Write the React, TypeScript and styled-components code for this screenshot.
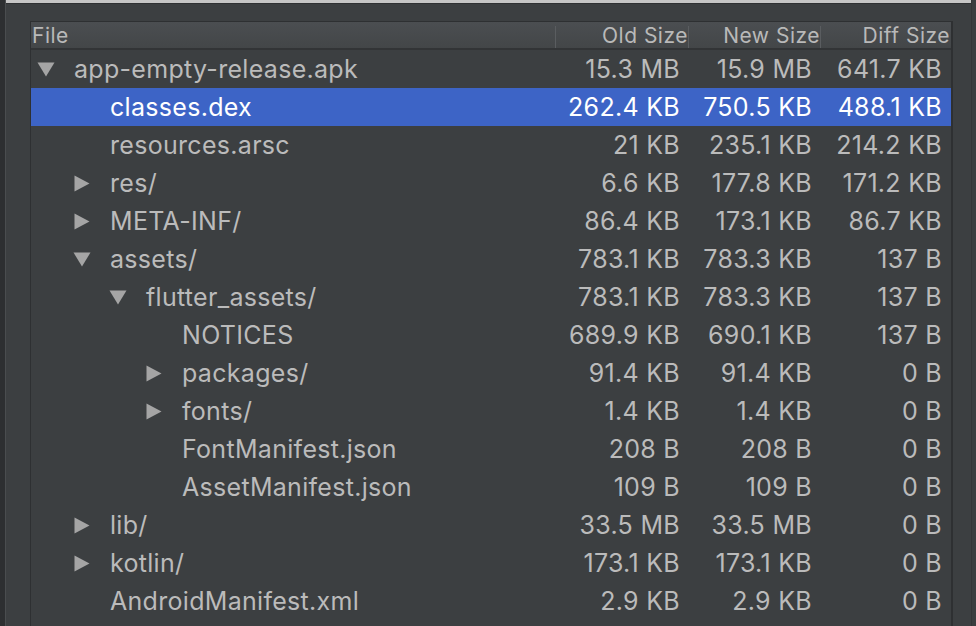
import React from "react";
import styled, { createGlobalStyle } from "styled-components";

const Global = createGlobalStyle`
  html, body { margin: 0; padding: 0; background: #3c3f41; overflow: hidden; }
  #root { height: 626px; }
`;

const Frame = styled.div`
  display: grid;
  grid-template-columns: 6px 1fr 5px;
  height: 626px;
  width: 976px;
  background: #3c3f41;
  font-family: Inter, "Noto Sans", sans-serif;
`;

const LeftRail = styled.div`
  background: #2d2f31;
  border-right: 1px solid #4a4d4f;
`;

const RightRail = styled.div`
  background: #3a3d3f;
  border-left: 1px solid #333537;
`;

const Main = styled.div`
  display: flex;
  flex-direction: column;
  min-width: 0;
`;

const TopStrip = styled.div`
  height: 3px;
  background: #c6c6c6;
  border-bottom: 1px solid #2f3133;
`;

const Panel = styled.div`
  flex: 1;
  padding: 17px 0 0 24px;
  display: flex;
  overflow: hidden;
`;

const Table = styled.div`
  width: 920px;
  border-left: 1px solid #2e3032;
  border-top: 1px solid #2e3032;
  border-right: 2px solid #2e3032;
  display: flex;
  flex-direction: column;
`;

const cols = "524px 133px 132px 130px";

const Header = styled.div`
  display: grid;
  grid-template-columns: ${cols};
  height: 26px;
  background: linear-gradient(#4b4e51, #434648);
  border-bottom: 2px solid #323436;
  color: #b9b9b9;
  font-size: 21px;
  line-height: 28px;
`;

const HeadCell = styled.div<{ $right?: boolean }>`
  padding: 0 ${(p) => (p.$right ? "0" : "1px")};
  text-align: ${(p) => (p.$right ? "right" : "left")};
  white-space: nowrap;
  overflow: hidden;
  position: relative;
  box-sizing: border-box;
  letter-spacing: 0.5px;
  ${(p) =>
    p.$right
      ? `&::before { content: ""; position: absolute; left: -2px; top: 4px; height: 22px; width: 2px; background: #2b2d2f; border-right: 1px solid #5a5d60; }`
      : ""}
`;

const Row = styled.div<{ $selected?: boolean }>`
  display: grid;
  grid-template-columns: ${cols};
  height: 38px;
  line-height: 38px;
  font-size: 25px;
  letter-spacing: 0.3px;
  color: ${(p) => (p.$selected ? "#ffffff" : "#bbbbbb")};
  background: ${(p) => (p.$selected ? "#3d64c6" : "transparent")};
`;

const NameCell = styled.div<{ $level: number }>`
  display: flex;
  align-items: center;
  padding-left: ${(p) => 6 + p.$level * 36}px;
  white-space: nowrap;
`;

const Toggle = styled.span`
  width: 37px;
  flex: none;
  display: flex;
  align-items: center;
`;

const Num = styled.div`
  text-align: right;
  padding-right: 8px;
  white-space: nowrap;
`;

const Arrow = ({ open }: { open: boolean }) =>
  open ? (
    <svg width="18" height="16" viewBox="0 0 18 16">
      <polygon points="0.5,1.5 17.5,1.5 9,15.5" fill="#a5a5a5" />
    </svg>
  ) : (
    <svg width="18" height="17" viewBox="0 0 18 17">
      <polygon points="1.5,0.5 16.5,8.5 1.5,16.5" fill="#a5a5a5" />
    </svg>
  );

type Item = {
  name: string;
  level: number;
  toggle?: "open" | "closed";
  old: string;
  nw: string;
  diff: string;
  selected?: boolean;
};

const items: Item[] = [
  { name: "app-empty-release.apk", level: 0, toggle: "open", old: "15.3 MB", nw: "15.9 MB", diff: "641.7 KB" },
  { name: "classes.dex", level: 1, old: "262.4 KB", nw: "750.5 KB", diff: "488.1 KB", selected: true },
  { name: "resources.arsc", level: 1, old: "21 KB", nw: "235.1 KB", diff: "214.2 KB" },
  { name: "res/", level: 1, toggle: "closed", old: "6.6 KB", nw: "177.8 KB", diff: "171.2 KB" },
  { name: "META-INF/", level: 1, toggle: "closed", old: "86.4 KB", nw: "173.1 KB", diff: "86.7 KB" },
  { name: "assets/", level: 1, toggle: "open", old: "783.1 KB", nw: "783.3 KB", diff: "137 B" },
  { name: "flutter_assets/", level: 2, toggle: "open", old: "783.1 KB", nw: "783.3 KB", diff: "137 B" },
  { name: "NOTICES", level: 3, old: "689.9 KB", nw: "690.1 KB", diff: "137 B" },
  { name: "packages/", level: 3, toggle: "closed", old: "91.4 KB", nw: "91.4 KB", diff: "0 B" },
  { name: "fonts/", level: 3, toggle: "closed", old: "1.4 KB", nw: "1.4 KB", diff: "0 B" },
  { name: "FontManifest.json", level: 3, old: "208 B", nw: "208 B", diff: "0 B" },
  { name: "AssetManifest.json", level: 3, old: "109 B", nw: "109 B", diff: "0 B" },
  { name: "lib/", level: 1, toggle: "closed", old: "33.5 MB", nw: "33.5 MB", diff: "0 B" },
  { name: "kotlin/", level: 1, toggle: "closed", old: "173.1 KB", nw: "173.1 KB", diff: "0 B" },
  { name: "AndroidManifest.xml", level: 1, old: "2.9 KB", nw: "2.9 KB", diff: "0 B" },
];

export default function App() {
  return (
    <>
      <Global />
      <Frame>
        <LeftRail />
        <Main>
          <TopStrip />
          <Panel>
            <Table>
              <Header>
                <HeadCell>File</HeadCell>
                <HeadCell $right>Old Size</HeadCell>
                <HeadCell $right>New Size</HeadCell>
                <HeadCell $right>Diff Size</HeadCell>
              </Header>
              {items.map((it) => (
                <Row key={it.name} $selected={it.selected}>
                  <NameCell $level={it.level}>
                    <Toggle>{it.toggle ? <Arrow open={it.toggle === "open"} /> : null}</Toggle>
                    {it.name}
                  </NameCell>
                  <Num>{it.old}</Num>
                  <Num>{it.nw}</Num>
                  <Num>{it.diff}</Num>
                </Row>
              ))}
            </Table>
          </Panel>
        </Main>
        <RightRail />
      </Frame>
    </>
  );
}
